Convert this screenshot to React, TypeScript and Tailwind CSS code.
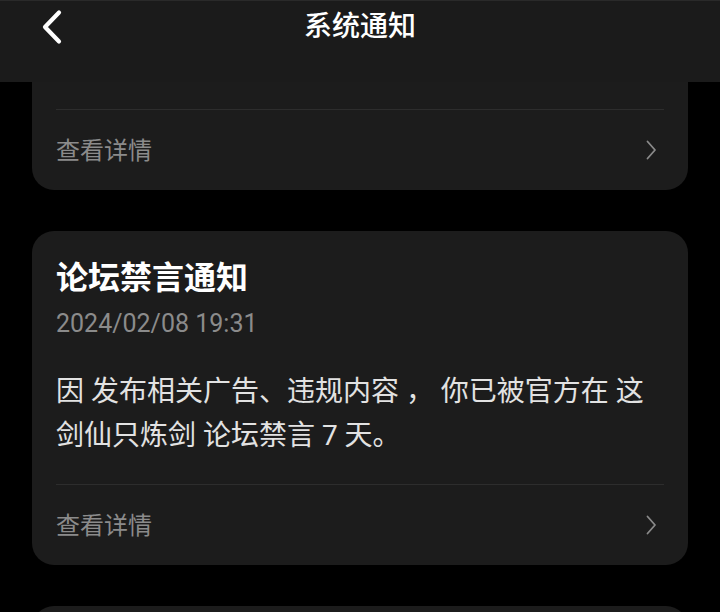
import { ReactNode } from 'react';

const CJK = "font-['Roboto','Noto_Sans_CJK_SC',sans-serif]";

function BackIcon() {
  return (
    <svg width="24" height="36" viewBox="0 0 24 36" fill="none" className="block">
      <path d="M19 3.5 L5 18 L19 32.5" stroke="#ffffff" strokeWidth="4.2" strokeLinecap="round" strokeLinejoin="round" />
    </svg>
  );
}

function ChevronRight() {
  return (
    <svg width="12" height="20" viewBox="0 0 12 20" fill="none" className="block">
      <path d="M2.5 1.5 L10 10 L2.5 18.5" stroke="#8a8a8a" strokeWidth="1.8" strokeLinecap="round" strokeLinejoin="round" />
    </svg>
  );
}

function DetailRow() {
  return (
    <>
      <div className="h-px bg-[#2d2d2d]" />
      <div className="flex h-[80px] items-center justify-between">
        <span className="mt-[2px] text-[24px] leading-[32px] text-[#8b8b8b]">查看详情</span>
        <span className="mr-[7px]">
          <ChevronRight />
        </span>
      </div>
    </>
  );
}

function Card({ children, className = '' }: { children: ReactNode; className?: string }) {
  return <div className={`bg-[#1c1c1c] px-6 ${className}`}>{children}</div>;
}

export default function App() {
  return (
    <div className={`min-h-[612px] w-[720px] overflow-hidden bg-black ${CJK}`}>
      {/* Header */}
      <header className="relative flex h-[82px] items-start justify-center border-t border-[#2a2a2a] bg-[#1b1b1b]">
        <button className="absolute left-[40px] top-[8px]">
          <BackIcon />
        </button>
        <h1 className="mt-[8px] text-[28px] font-medium leading-[36px] text-white">系统通知</h1>
      </header>

      <div className="flex flex-col gap-[41px] px-8">
        {/* Previous card, scrolled under the header */}
        <Card className="rounded-b-[22px] pt-[27px]">
          <DetailRow />
        </Card>

        {/* Ban notice */}
        <Card className="rounded-[22px] pt-[27px]">
          <h2 className="text-[32px] font-bold leading-[40px] text-white">论坛禁言通知</h2>
          <p className="mt-[10px] text-[25px] leading-[32px] text-[#8b8b8b]">2024/02/08 19:31</p>
          <p className="mt-[30px] text-[28px] leading-[44px] text-[#e2e2e2]">
            因 发布相关广告、违规内容 ， 你已被官方在 这剑仙只炼剑 论坛禁言 7 天。
          </p>
          <div className="mt-[26px]">
            <DetailRow />
          </div>
        </Card>

        {/* Next card, cut off by the viewport */}
        <Card className="h-[160px] rounded-[22px]" />
      </div>
    </div>
  );
}
